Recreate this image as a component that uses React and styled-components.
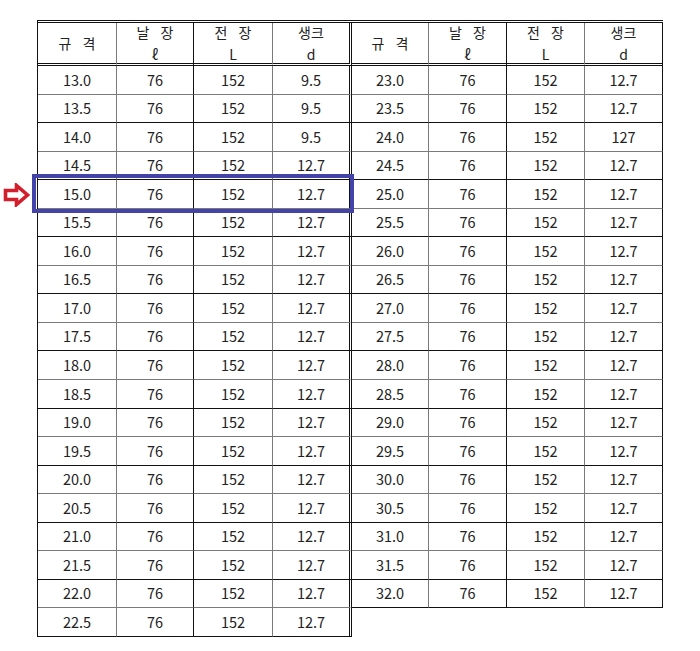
import React from "react";
import styled, { createGlobalStyle } from "styled-components";

const Global = createGlobalStyle`
  html, body { margin: 0; padding: 0; background: #fff; }
  body { font-family: "Noto Sans CJK KR", "Noto Sans", sans-serif; color: #1e1e1e; }
`;

const Page = styled.div`
  position: relative;
  width: 700px;
  height: 651px;
  padding: 20px 0 0 37px;
  box-sizing: border-box;
`;

const Tables = styled.div`
  display: flex;
  align-items: flex-start;
`;

const Grid = styled.div`
  display: grid;
  grid-template-columns: ${(p) => p.$cols};
  grid-template-rows: 43px repeat(${(p) => p.$rows}, 28.55px);
  border-top: 3px double #111;
  border-left: ${(p) => (p.$first ? "1px solid #111" : "none")};
`;

const Cell = styled.div`
  box-sizing: border-box;
  display: flex;
  align-items: center;
  justify-content: center;
  border-bottom: ${(p) => (p.$rowGray ? "1px solid #7a7a7a" : "1px solid #111")};
  border-right: ${(p) =>
    p.$double ? "3px double #111" : p.$colGray ? "1px solid #7a7a7a" : "1px solid #111"};
  font-size: 14.5px;
  line-height: 1;
  color: #222;
`;

const HeadCell = styled(Cell)`
  flex-direction: column;
  border-bottom: 3px double #111;
  font-size: 14px;
  line-height: 22px;
  word-spacing: 8px;
  white-space: pre;
`;

const Highlight = styled.div`
  position: absolute;
  left: 32px;
  top: 174px;
  width: 322px;
  height: 39px;
  box-sizing: border-box;
  border: 4px solid #4444a8;
  pointer-events: none;
`;

const Arrow = styled.svg`
  position: absolute;
  left: 3px;
  top: 183px;
`;

const headers = [
  ["규 격"],
  ["날 장", "ℓ"],
  ["전 장", "L"],
  ["생크", "d"],
];

const leftRows = [];
for (let i = 0; i < 20; i++) {
  const s = 13 + i * 0.5;
  leftRows.push([s.toFixed(1), "76", "152", s < 14.5 ? "9.5" : "12.7"]);
}
const rightRows = [];
for (let i = 0; i < 19; i++) {
  const s = 23 + i * 0.5;
  rightRows.push([s.toFixed(1), "76", "152", s === 24 ? "127" : "12.7"]);
}

function SpecTable({ rows, cols, first }) {
  return (
    <Grid $cols={cols} $rows={rows.length} $first={first}>
      {headers.map((h, c) => (
        <HeadCell key={"h" + c} $colGray={c % 2 === 0} $double={first && c === 3}>
          {h.map((line, k) => (
            <span key={k}>{line}</span>
          ))}
        </HeadCell>
      ))}
      {rows.map((r, ri) =>
        r.map((v, c) => (
          <Cell
            key={ri + "-" + c}
            $rowGray={ri % 2 === 0 && ri !== rows.length - 1}
            $colGray={c % 2 === 0 && c !== 3}
            $double={first && c === 3}
          >
            {v}
          </Cell>
        ))
      )}
    </Grid>
  );
}

export default function App() {
  return (
    <>
      <Global />
      <Page>
        <Tables>
          <SpecTable rows={leftRows} cols="79px 77px 79px 79px" first />
          <SpecTable rows={rightRows} cols="77px 78px 78px 78px" />
        </Tables>
        <Highlight />
        <Arrow width="27" height="24" viewBox="0 0 27 24">
          <path
            d="M2.5 7.5 H13.5 V2.5 L24.5 12 L13.5 21.5 V16.5 H2.5 Z"
            fill="#fff"
            stroke="#d21f2b"
            strokeWidth="3.6"
            strokeLinejoin="miter"
          />
        </Arrow>
      </Page>
    </>
  );
}
